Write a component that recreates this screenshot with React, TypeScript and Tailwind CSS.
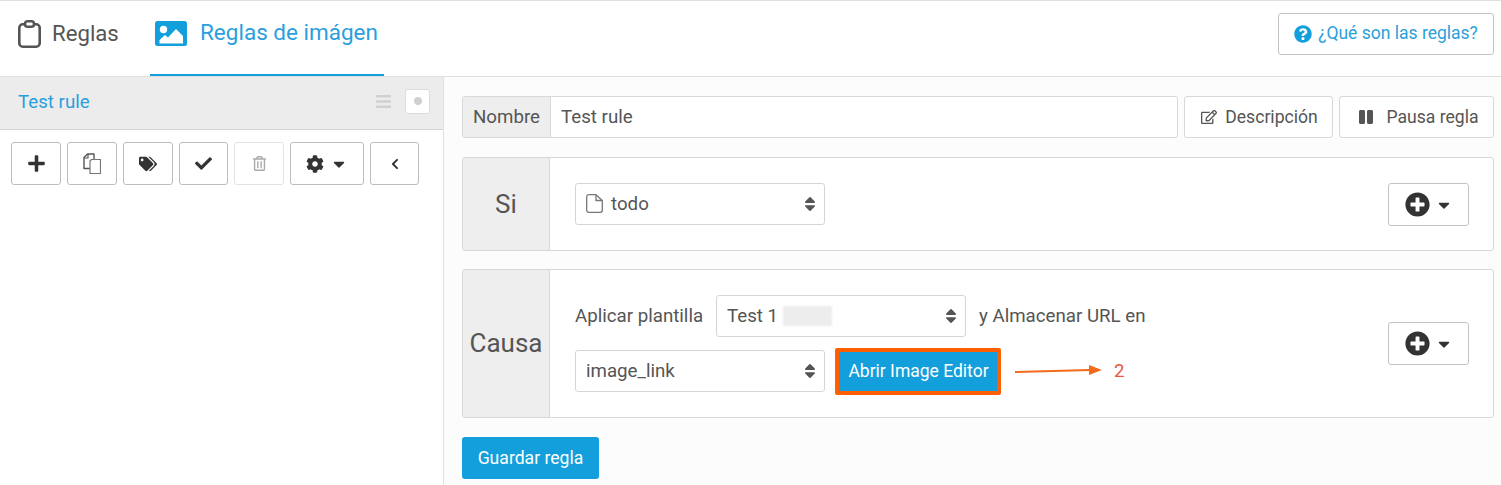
import { ReactNode } from 'react';
import {
  FaBars,
  FaCaretDown,
  FaCheck,
  FaChevronLeft,
  FaCog,
  FaPause,
  FaPlus,
  FaPlusCircle,
  FaQuestionCircle,
  FaRegEdit,
  FaRegTrashAlt,
  FaSort,
  FaTags,
} from 'react-icons/fa';

function CopyIcon() {
  return (
    <svg width="18" height="21" viewBox="0 0 18 21" fill="none" stroke="#555" strokeWidth="1.200" strokeLinejoin="round">
      <path d="M1 15.500V4.500L4.500 1H11V15.500Z" strokeWidth="1.400" />
      <path d="M1 5H5V1" />
      <path d="M8.500 6.500H17.500V20.500H7V8Z" fill="#fff" stroke="#777" />
    </svg>
  );
}

function ClipboardIcon() {
  return (
    <svg width="23" height="28" viewBox="0 0 23 28" fill="none" stroke="#555" strokeWidth="2.600" className="shrink-0">
      <rect x="1.300" y="4.300" width="20.400" height="22.400" rx="3.500" />
      <rect x="7" y="1.300" width="9" height="5.400" rx="2.500" fill="#fff" />
    </svg>
  );
}

function ImageIcon() {
  return (
    <svg width="32" height="25" viewBox="0 0 32 25" className="shrink-0">
      <rect width="32" height="25" rx="2.500" fill="#129fdb" />
      <circle cx="8.500" cy="8.500" r="3.700" fill="#fff" />
      <path d="M4.500 22.500V19L10 14L13 16.500L21 8L28 15V22.500Z" fill="#fff" />
    </svg>
  );
}

function FileIcon() {
  return (
    <svg width="17" height="19" viewBox="0 0 17 19" fill="none" stroke="#777" strokeWidth="1.300" strokeLinejoin="round" className="shrink-0">
      <path d="M2.500 0.700H10L16.300 6.500V16.300A2 2 0 0 1 14.300 18.300H2.700A2 2 0 0 1 0.700 16.300V2.500A2 2 0 0 1 2.500 0.700Z" />
      <path d="M10 0.700V6.500H16.300" />
    </svg>
  );
}

function ToolButton({ width, disabled, children }: { width: string; disabled?: boolean; children: ReactNode }) {
  return (
    <button
      className={`${width} h-[43px] flex items-center justify-center gap-[6px] rounded-[3px] bg-white border ${
        disabled ? 'border-[#e2e2e2] text-[#aaa]' : 'border-[#bdbdbd] text-[#333]'
      }`}
    >
      {children}
    </button>
  );
}

function SelectBox({ width, children }: { width: string; children: ReactNode }) {
  return (
    <div className={`${width} h-[42px] shrink-0 flex items-center justify-between pl-[10px] pr-[5px] bg-white border border-[#d5d5d5] rounded-[3px]`}>
      <div className="flex items-center gap-[8px]">{children}</div>
      <FaSort size={18} className="text-[#555]" />
    </div>
  );
}

function AddButton() {
  return (
    <button className="w-[81px] h-[43px] shrink-0 flex items-center justify-center gap-[5px] bg-white border border-[#c4c4c4] rounded-[3px] text-[#333]">
      <FaPlusCircle size={25} />
      <FaCaretDown size={18} />
    </button>
  );
}

function RulePanel({ label, height, children }: { label: string; height: string; children: ReactNode }) {
  return (
    <section className={`${height} flex border border-[#d8d8d8] rounded-[3px] bg-white overflow-hidden`}>
      <div className="w-[87px] shrink-0 flex items-center justify-center bg-[#eeeeee] border-r border-[#d8d8d8] text-[26px] text-[#555]">
        {label}
      </div>
      <div className="flex-1 flex justify-between pl-[25px] pr-[24px]">{children}</div>
    </section>
  );
}

export default function App() {
  return (
    <div className="w-[1501px] h-[485px] flex flex-col overflow-hidden bg-white text-[18.7px] text-[#555] font-['Roboto',sans-serif]">
      {/* Tabs */}
      <header className="h-[77px] shrink-0 flex items-stretch justify-between border-t border-b border-[#e0e0e0] pl-[18px] pr-[7px]">
        <nav className="flex">
          <a className="flex items-center gap-[11px] pb-[9px] w-[132px] text-[22.200px] text-[#555]">
            <ClipboardIcon />
            Reglas
          </a>
          <a className="flex items-center gap-[13px] w-[234px] pl-[5px] pb-[9px] border-b-2 border-[#129fdb] text-[22.500px] text-[#2b9fdc]">
            <ImageIcon />
            Reglas de imágen
          </a>
        </nav>
        <div className="flex items-center pb-[10px]">
          <button className="w-[216px] h-[42px] flex items-center justify-center gap-[6px] border border-[#c4c4c4] rounded-[3px] text-[17.500px] text-[#2b9fdc]">
            <FaQuestionCircle size={18} className="text-[#129fdb]" />
            ¿Qué son las reglas?
          </button>
        </div>
      </header>

      <div className="flex-1 flex min-h-0">
        {/* Rule list */}
        <aside className="w-[444px] shrink-0 border-r border-[#e0e0e0]">
          <div className="h-[53px] flex items-center justify-between pl-[18px] pr-[13px] bg-[#ececec] border-b border-[#d5d5d5]">
            <span className="text-[#2b9fdc] pb-[2px]">Test rule</span>
            <div className="flex items-center gap-[13px] pb-[4px]">
              <FaBars size={17} className="text-[#d0d0d0]" />
              <div className="w-[25px] h-[25px] flex items-center justify-center bg-white border border-[#dcdcdc] rounded-[3px]">
                <span className="w-[8px] h-[8px] rounded-full bg-[#d0d0d0]" />
              </div>
            </div>
          </div>
          <div className="flex gap-[6px] pl-[11px] pt-[12px]">
            <ToolButton width="w-[50px]"><FaPlus size={19} /></ToolButton>
            <ToolButton width="w-[50px]"><CopyIcon /></ToolButton>
            <ToolButton width="w-[50px]"><FaTags size={18} /></ToolButton>
            <ToolButton width="w-[49px]"><FaCheck size={17} /></ToolButton>
            <ToolButton width="w-[50px]" disabled><FaRegTrashAlt size={15} /></ToolButton>
            <ToolButton width="w-[74px]"><FaCog size={18} /><FaCaretDown size={18} /></ToolButton>
            <ToolButton width="w-[49px]"><FaChevronLeft size={12} /></ToolButton>
          </div>
        </aside>

        {/* Rule editor */}
        <main className="flex-1 bg-[#fcfcfc] pl-[18px] pr-[7px] pt-[19px]">
          <div className="flex gap-[6px] h-[42px]">
            <div className="flex-1 flex border border-[#d8d8d8] rounded-[3px] bg-white overflow-hidden">
              <span className="w-[88px] flex items-center justify-center bg-[#eeeeee] border-r border-[#d8d8d8]">Nombre</span>
              <span className="flex items-center pl-[10px]">Test rule</span>
            </div>
            <button className="w-[149px] flex items-center justify-center gap-[8px] pl-[2px] bg-white border border-[#d8d8d8] rounded-[3px] text-[17.600px]">
              <FaRegEdit size={16} />
              Descripción
            </button>
            <button className="w-[155px] flex items-center justify-center gap-[12px] pl-[4px] bg-white border border-[#d8d8d8] rounded-[3px] text-[17.600px]">
              <FaPause size={16} />
              Pausa regla
            </button>
          </div>

          <div className="mt-[19px]">
            <RulePanel label="Si" height="h-[94px]">
              <div className="pt-[25px]">
                <SelectBox width="w-[250px]">
                  <FileIcon />
                  todo
                </SelectBox>
              </div>
              <div className="pt-[25px]"><AddButton /></div>
            </RulePanel>
          </div>

          <div className="mt-[18px]">
            <RulePanel label="Causa" height="h-[149px]">
              <div className="flex flex-col pt-[25px]">
                <div className="flex items-center h-[42px]">
                  <span className="w-[141px]">Aplicar plantilla</span>
                  <SelectBox width="w-[250px]">
                    Test 1
                    <span className="-ml-[3px] w-[49px] h-[20px] bg-[#ededed] blur-[1px]" />
                  </SelectBox>
                  <span className="ml-[13px]">y Almacenar URL en</span>
                </div>
                <div className="flex items-center h-[42px] mt-[13px]">
                  <SelectBox width="w-[250px]">image_link</SelectBox>
                  <button className="ml-[10px] w-[166px] h-[47px] flex items-center justify-center pl-[1px] bg-[#129fdb] border-4 border-[#ff5f00] rounded-[2px] text-[17.500px] text-white">
                    Abrir Image Editor
                  </button>
                  <svg width="87" height="10" viewBox="0 0 87 10" className="ml-[14px] -mt-[2px]">
                    <path d="M0 7L75 5" stroke="#f26a1b" strokeWidth="2" />
                    <path d="M74 0L87 5L74 10z" fill="#f26a1b" />
                  </svg>
                  <span className="ml-[12px] text-[#e5583d]">2</span>
                </div>
              </div>
              <div className="pt-[52px]"><AddButton /></div>
            </RulePanel>
          </div>

          <button className="mt-[19px] w-[137px] h-[42px] bg-[#129fdb] rounded-[3px] text-[17.600px] text-white">
            Guardar regla
          </button>
        </main>
      </div>
    </div>
  );
}
